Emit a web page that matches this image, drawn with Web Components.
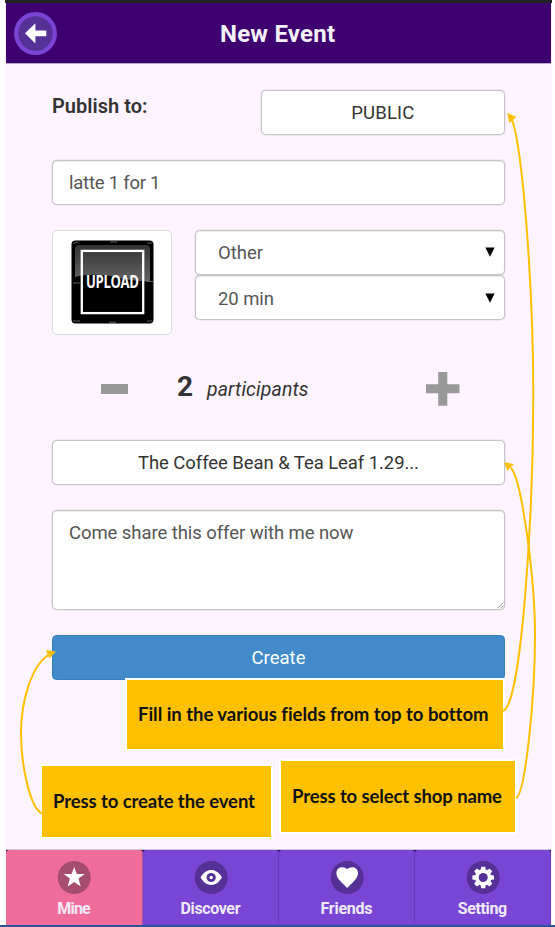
<!DOCTYPE html>
<html lang="en">
<head>
<meta charset="utf-8">
<title>New Event</title>
<style>
html,body{margin:0;height:100%;background:#fff;overflow:hidden}
body{font-family:Roboto,"Liberation Sans",sans-serif;color:#333}
</style>
</head>
<body>
<event-app></event-app>
<script>
const define = (name, html, ready) => customElements.define(name, class extends HTMLElement {
  connectedCallback() {
    if (this.shadowRoot) return;
    const root = this.attachShadow({mode: 'open'});
    root.innerHTML = html;
    if (ready) ready(this, root);
  }
});

/* One line of text, tracked to take up the width given in "w". */
define('line-text', `<style>
:host{display:inline-block;white-space:nowrap;flex:none}
span{display:inline-block}
</style><span><slot></slot></span>`, (el, root) => {
  const span = root.querySelector('span');
  const w = parseFloat(el.getAttribute('w'));
  const n = el.textContent.length;
  const natural = span.getBoundingClientRect().width;
  if (w && natural) {
    const ls = (w - natural) / (n - 1);
    span.style.letterSpacing = ls + 'px';
    span.style.marginRight = -ls + 'px';
  }
});

define('page-header', `<style>
:host{display:grid;grid-template-columns:58px 1fr 58px;align-items:center;margin:0 1px;background:#3d006e;border-bottom:1px solid #b9a9c8;box-sizing:border-box;height:61px;color:#f4f0f8;font-weight:700;font-size:24px}
svg{display:block;margin-left:8px}
.t{justify-self:center;padding-top:2px;margin-left:-2px}
</style>
<svg width="43" height="43" viewBox="0 0 43 43"><circle cx="21.5" cy="21.5" r="19.3" fill="#553096" stroke="#7a45d6" stroke-width="4.2"/><path d="M11 21.3 21.4 11.2V18.4H32.3V24.3H21.4V31.5Z" fill="#fff"/></svg>
<span class="t"><slot></slot></span>`);

define('field-box', `<style>
:host{display:flex;align-items:center;box-sizing:border-box;height:45px;padding:0 16px;background:#fff;border:1px solid #c6c3c8;border-radius:4.5px;font-size:18.5px;color:#555;box-shadow:0 0 0 .5px #c6c3c880,inset 0 1px 1px #00000014}
:host([centered]){justify-content:center;color:#333;box-shadow:0 0 0 .5px #c6c3c880}
:host([select]){padding:0 9px 0 22px;justify-content:space-between}
:host([area]){height:100px;align-items:flex-start;padding-top:9px;position:relative}
::slotted(line-text){margin-top:2px}
svg{display:none;flex:none}
:host([select]) .arrow,:host([area]) .grip{display:block}
.grip{position:absolute;right:0;bottom:0}
</style><slot></slot>
<svg class="arrow" width="10" height="10" viewBox="0 0 10 10"><path d="M.4.5H9.6L5 9.8Z" fill="#000"/></svg>
<svg class="grip" width="7" height="7" viewBox="0 0 7 7"><path d="M.5 6.3 6.3.5M3.5 6.3 6.3 3.5" stroke="#888" stroke-width=".9"/></svg>`);

define('upload-tile', `<style>
:host{display:flex;align-items:center;justify-content:center;box-sizing:border-box;width:120px;height:105.5px;background:#fff;border:1px solid #dad7dc;border-radius:5px}
svg{display:block;overflow:visible}
</style>
<svg width="83" height="84" viewBox="0 0 83 84">
<defs><linearGradient id="g" x1="0" y1="0" x2="0" y2="1"><stop offset="0" stop-color="#333"/><stop offset="1" stop-color="#626262"/></linearGradient></defs>
<rect x=".5" y=".5" width="82" height="83" rx="4" fill="#000"/>
<path d="M4 37V9Q4 5 8 5H75Q79 5 79 9V41Q62 42 40 36Q18 33 4 37Z" fill="url(#g)"/>
<path d="M39 2H46M2 3.5 7 2M76 3H81M2 43H9M75 41.5H82M2 81H9M38 82.2H45M76 81H81" stroke="#999" stroke-width=".8" opacity=".75"/>
<rect x="10.8" y="10.9" width="61.4" height="62.2" fill="none" stroke="#fff" stroke-width="2.3"/>
<g transform="translate(15 48.3) scale(.715 1)"><text textLength="74" lengthAdjust="spacing" font-family="Open Sans, sans-serif" font-weight="700" font-size="18.3" fill="#fff">UPLOAD</text></g>
</svg>`);

define('count-row', `<style>
:host{display:grid;grid-template-columns:125px 30px 1fr 110px;align-items:center;height:56px}
.m{margin-left:48.5px;width:27.5px;height:9.3px;background:#999;margin-top:2px}
.n{font-size:28px;font-weight:700;margin-top:-4px}
.p{font-size:19.5px;font-style:italic;margin-top:2px}
svg{margin-left:31px;margin-top:1px;display:block}
</style><div class="m"></div><div class="n">2</div><div class="p"><slot></slot></div>
<svg width="34" height="34" viewBox="0 0 34 34"><path d="M12.2 0H21.3V12.2H33.5V21.3H21.3V33.7H12.2V21.3H0V12.2H12.2Z" fill="#999"/></svg>`);

define('create-button', `<style>
:host{display:flex;align-items:center;justify-content:center;box-sizing:border-box;height:45px;background:#428bca;border:1px solid #357ebd;border-radius:4.5px;color:#fff;font-size:18.5px}
::slotted(line-text){margin-top:1px}
</style><slot></slot>`);

define('event-form', `<style>
:host{display:flex;flex-direction:column;gap:25px;padding:26px 47px 0;margin-top:-.4px}
.top{display:flex;justify-content:space-between}
.top field-box{--n:0}
.label{font-size:20px;font-weight:600;padding-top:4px}
.top field-box{width:244.5px}
.media{display:flex;gap:23px}
.sel{flex:1;display:flex;flex-direction:column;gap:.5px}
count-row{margin:0 0 -1.5px}
</style>
<div class="top"><div class="label"><line-text w="95.5">Publish to:</line-text></div><field-box centered><line-text w="63">PUBLIC</line-text></field-box></div>
<field-box><line-text w="91.5">latte 1 for 1</line-text></field-box>
<div class="media"><upload-tile></upload-tile><div class="sel"><field-box select><line-text w="45">Other</line-text></field-box><field-box select><line-text w="56">20 min</line-text></field-box></div></div>
<count-row><line-text w="101.5">participants</line-text></count-row>
<field-box centered><line-text w="281">The Coffee Bean &amp; Tea Leaf 1.29...</line-text></field-box>
<field-box area><line-text w="284.5">Come share this offer with me now</line-text></field-box>
<create-button><line-text w="54">Create</line-text></create-button>`);

define('nav-tab', `<style>
:host{display:flex;flex-direction:column;align-items:center;box-sizing:border-box;padding:10px 0 0;background:#7945d5;border-radius:3px 3px 0 0;border-right:1px solid #693bbd;color:#f0eaf6;font-size:16px;font-weight:700;--disc:#553096}
:host([active]){background:#f06c9b;border-color:#b14b9b;--disc:#a64c6d}
svg{display:block;margin-bottom:5px}
circle{fill:var(--disc)}
g{fill:#fff}
.hole{fill:var(--disc)}
</style><svg width="34" height="34" viewBox="-17.2 -17.5 34 34"><circle r="16.5"/><g></g></svg><slot></slot>`, (el, root) => {
  let gear = '';
  for (let a = 0; a < 360; a += 45) gear += `<path d="M-2.6-7-2-10.8H2L2.6-7Z" transform="rotate(${a})"/>`;
  root.querySelector('g').innerHTML = {
    star: '<path d="M0-10.6 2.6-3.6H10.5L4.3 1.1 6.5 9.1 0 4.5-6.5 9.1-4.3 1.1-10.5-3.6H-2.6Z"/>',
    eye: '<path d="M-10.7 0C-7.5-5.2-4-7.4 0-7.4S7.5-5.2 10.7 0C7.5 5.2 4 7.4 0 7.4S-7.5 5.2-10.7 0Z"/><circle class="hole" r="4.6"/><circle r="1.7" style="fill:#fff"/>',
    heart: '<path d="M0 10.4C-3.4 6.8-10.8 1.5-10.8-4.2-10.8-8-8.4-10.3-5.4-10.3-2.8-10.3-.8-9.6 0-8.2 .8-9.6 2.8-10.3 5.4-10.3 8.4-10.3 10.8-8 10.8-4.2 10.8 1.5 3.4 6.8 0 10.4Z"/>',
    gear: gear + '<circle r="8.2" style="fill:#fff"/><circle class="hole" r="4.5"/>'
  }[el.getAttribute('icon')];
});

define('tab-bar', `<style>
:host{display:grid;grid-template-columns:137px 136px 136px 1fr;height:75px;margin:0 1px;background:#2a0850;box-shadow:0 -1px #cdc5d2}
</style>
<nav-tab icon="star" active><line-text w="33.5">Mine</line-text></nav-tab>
<nav-tab icon="eye"><line-text w="60">Discover</line-text></nav-tab>
<nav-tab icon="heart"><line-text w="52">Friends</line-text></nav-tab>
<nav-tab icon="gear"><line-text w="49.5">Setting</line-text></nav-tab>`);

define('call-out', `<style>
:host{position:absolute;display:flex;align-items:center;box-sizing:border-box;padding:0 0 2px 11px;background:#ffc000;border:2px solid #fff;color:#111;font:700 18.5px Lato,"Open Sans",sans-serif}
</style><slot></slot>`);

define('guide-layer', `<style>
:host{position:absolute;inset:0;display:block}
svg{position:absolute;inset:0}
.a{left:125px;top:678px;width:380px;height:73px}
.b{left:40px;top:764px;width:233px;height:75px}
.c{left:279px;top:759px;width:238px;height:75px}
</style>
<call-out class="a"><line-text w="349.5">Fill in the various fields from top to bottom</line-text></call-out>
<call-out class="b"><line-text w="202">Press to create the event</line-text></call-out>
<call-out class="c"><line-text w="210">Press to select shop name</line-text></call-out>
<svg width="555" height="927" viewBox="0 0 555 927">
<g fill="none" stroke="#ffc000" stroke-width="2">
<path d="M503 711C522 705 533.3 510 533.3 395C533.3 290 523 150 512 120"/>
<path d="M516 798C525 795 535 700 535 635C535 580 522 480 511 468"/>
<path d="M42 813.5C30 808 21 765 21 733C21 700 32 665 49 654.5"/>
</g>
<path d="M507.3 113 516.3 117 509.3 123ZM504.2 462.3 514 464 507.3 470.7ZM56 651.5 46 650 49.3 658.5Z" fill="#ffc000"/>
</svg>`);

define('event-app', `<style>
:host{display:flex;flex-direction:column;position:relative;box-sizing:border-box;width:555px;height:927px;background:#fff}
main{display:flex;flex-direction:column;flex:1;width:547px;box-sizing:border-box;margin-left:5px;background:#fef4ff;border-top:3px solid #222}
event-form{flex:1}
footer{height:2px;background:#2a559b}
</style>
<main>
<page-header><line-text w="115">New Event</line-text></page-header>
<event-form></event-form>
<tab-bar></tab-bar>
</main>
<footer></footer>
<guide-layer></guide-layer>`);
</script>
</body>
</html>
